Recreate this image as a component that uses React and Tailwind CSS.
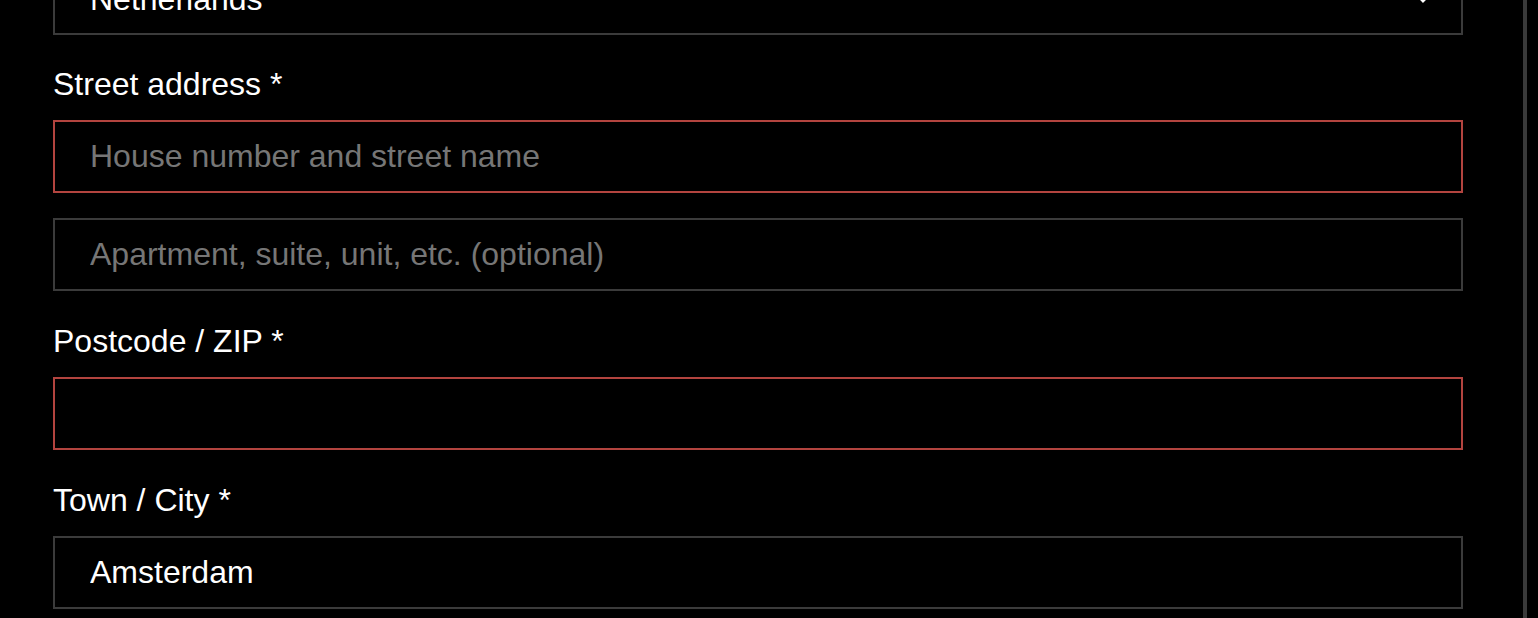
import * as React from "react";

function Label({ children }) {
  return (
    <label className="block text-[32px] leading-[48px] text-white mb-[12px]">
      {children}
    </label>
  );
}

function Field({ placeholder, value, invalid }) {
  return (
    <input
      type="text"
      defaultValue={value}
      placeholder={placeholder}
      className={
        "block w-full h-[73px] bg-black border-2 pl-[35px] pr-[33px] text-[32px] text-white placeholder:text-[#767676] outline-none " +
        (invalid ? "border-[#b3443f]" : "border-[#3b3b3b]")
      }
    />
  );
}

export default function App() {
  return (
    <div
      className="min-h-screen h-[618px] overflow-hidden bg-black flex"
      style={{ fontFamily: '"Liberation Sans", Arial, sans-serif' }}
    >
      <main className="w-[1527px] shrink-0 pl-[53px] pr-[60px] border-r-4 border-[#3a3a3a]">
        {/* Country select, scrolled mostly out of view */}
        <div className="-mt-[38px] mb-[25px] relative h-[73px] border-2 border-[#3b3b3b] flex items-center pl-[35px] pr-[30px]">
          <span className="text-[32px] text-white flex-1">Netherlands</span>
          <svg
            width="12"
            height="8"
            viewBox="0 0 12 8"
            fill="none"
            stroke="white"
            strokeWidth="2"
            className="mr-[2px]"
          >
            <path d="M1 1.5 L6 6.5 L11 1.5" />
          </svg>
        </div>

        <Label>Street address *</Label>
        <div className="mb-[25px]">
          <Field placeholder="House number and street name" invalid />
        </div>
        <div className="mb-[26px]">
          <Field placeholder="Apartment, suite, unit, etc. (optional)" />
        </div>

        <Label>Postcode / ZIP *</Label>
        <div className="mb-[26px]">
          <Field invalid />
        </div>

        <Label>Town / City *</Label>
        <div className="mb-[25px]">
          <Field value="Amsterdam" />
        </div>
      </main>
      <div className="flex-1 bg-black" />
    </div>
  );
}
